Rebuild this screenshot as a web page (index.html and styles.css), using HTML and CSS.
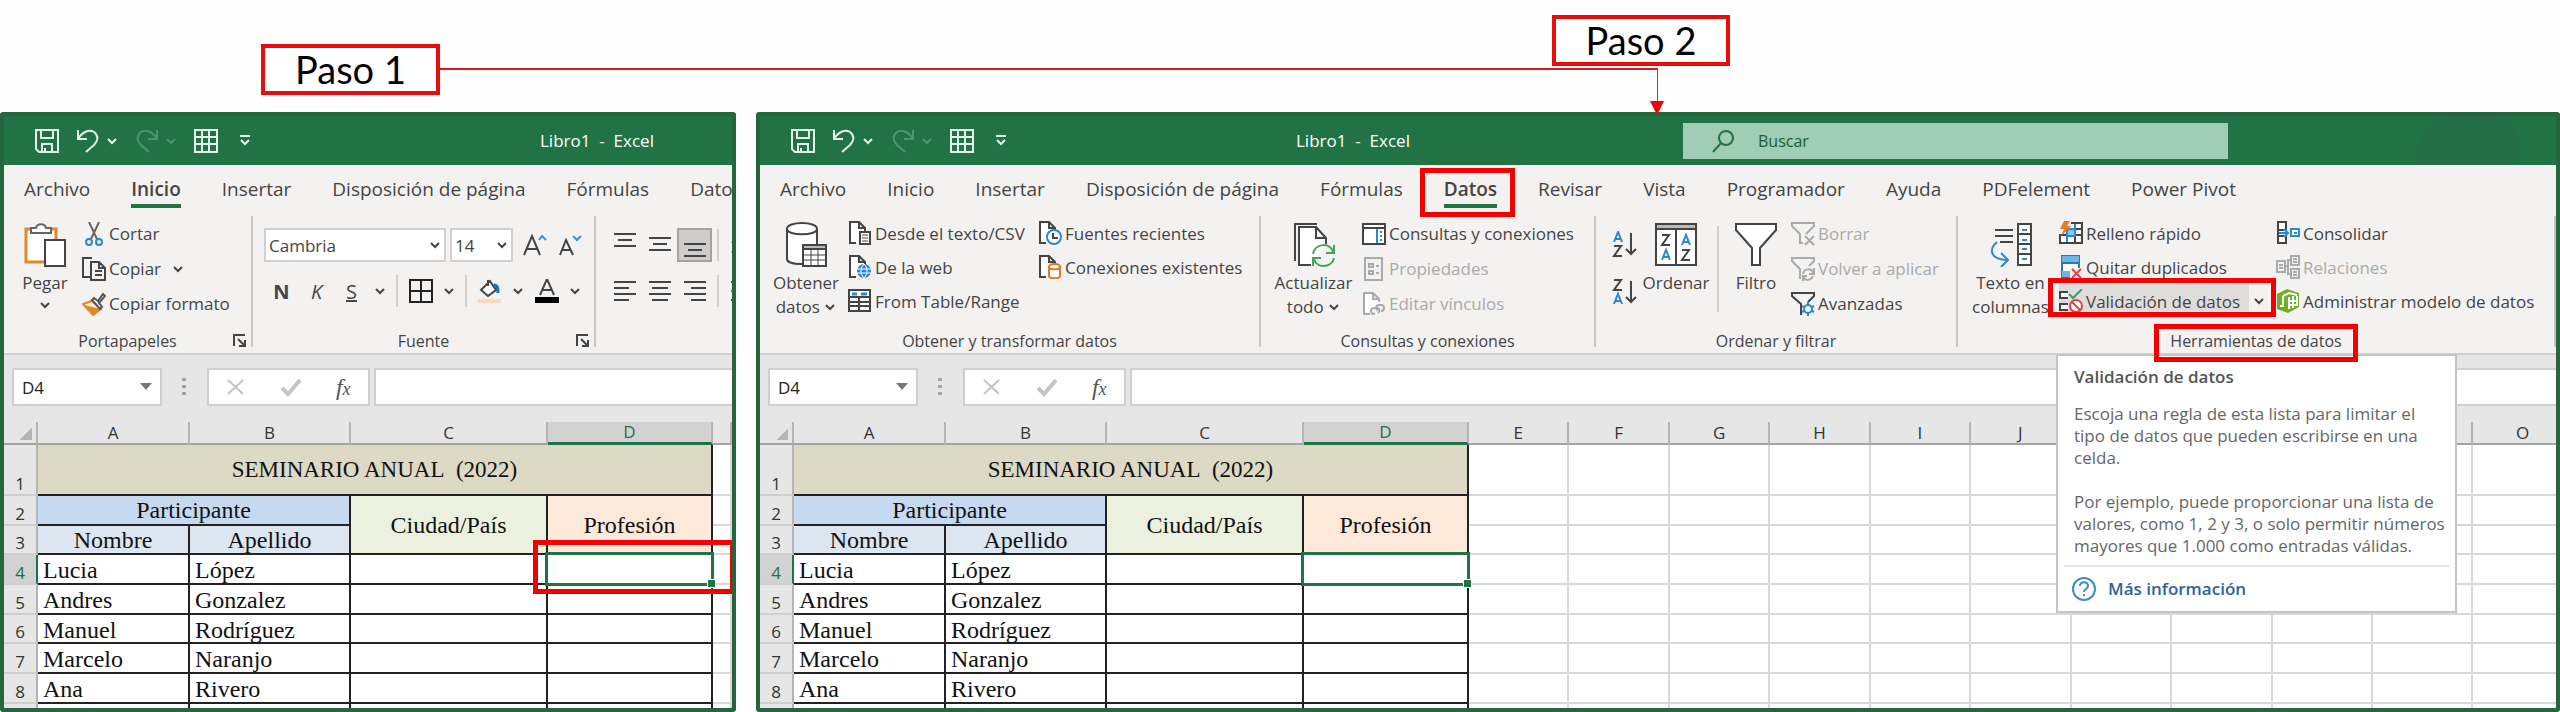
FILE: index.html
```html
<!DOCTYPE html>
<html lang="es">
<head>
    <meta charset="UTF-8">
    <meta name="viewport" content="width=device-width, initial-scale=1.0">
    <title>Validación de datos en Excel</title>
    <link rel="stylesheet" href="styles.css">
</head>
<body>
    <!-- shared icons -->
    <svg class="icon-defs" aria-hidden="true">
        <symbol id="i-save" viewBox="0 0 24 24"><path d="M1 1h22v22H4l-3-3zM6 1v8h12V1M7 23v-8h10v8M10 23v-4"/></symbol>
        <symbol id="i-undo" viewBox="0 0 24 24"><path d="M2 1v9h9M2 10C6 3 13 0 18 3c5 4 4 9 0 13l-8 7"/></symbol>
        <symbol id="i-redo" viewBox="0 0 24 24"><path d="M22 1v9h-9M22 10C18 3 11 0 6 3c-5 4-4 9 0 13l8 7"/></symbol>
        <symbol id="i-grid" viewBox="0 0 24 24"><path d="M1 1h22v22H1zM1 8h22M1 15h22M8 1v14M15 1v22M8 15v8"/></symbol>
        <symbol id="i-more" viewBox="0 0 12 12"><path d="M1 1h10M2 5l4 4 4-4"/></symbol>
        <symbol id="i-chev" viewBox="0 0 12 12"><path d="M2 4l4 4 4-4"/></symbol>
        <symbol id="i-launch" viewBox="0 0 14 14"><path d="M1 12V1h11M5 5l7 7M12 6v6H6"/></symbol>
        <symbol id="i-sheet" viewBox="0 0 24 24"><path fill="#fff" d="M8 22H2V1h9l6 6v3M11 1v6h6"/></symbol>
    </svg>

    <header class="steps">
        <div class="step step-one">Paso 1</div>
        <div class="step step-two">Paso 2</div>
        <div class="connector"></div>
        <svg class="connector-head" viewBox="0 0 14 14" aria-hidden="true"><path d="M0 0h14L7 14z"/></svg>
    </header>

    <main class="screens">
        <!-- Paso 1 -->
        <section class="excel">
            <div class="titlebar">
                <div class="quick-access">
                    <button aria-label="Guardar"><svg class="qi"><use href="#i-save"/></svg></button>
                    <button aria-label="Deshacer"><svg class="qi"><use href="#i-undo"/></svg><svg class="chev"><use href="#i-chev"/></svg></button>
                    <button class="faded" aria-label="Rehacer"><svg class="qi"><use href="#i-redo"/></svg><svg class="chev"><use href="#i-chev"/></svg></button>
                    <button aria-label="Tabla"><svg class="qi"><use href="#i-grid"/></svg></button>
                    <button aria-label="Personalizar"><svg class="chev more"><use href="#i-more"/></svg></button>
                </div>
                <div class="title">Libro1&nbsp; -&nbsp; Excel</div>
            </div>
            <nav class="tabs">
                <button>Archivo</button>
                <button class="active">Inicio</button>
                <button>Insertar</button>
                <button>Disposición de página</button>
                <button>Fórmulas</button>
                <button>Datos</button>
            </nav>
            <div class="ribbon">
                <div class="group group-clipboard">
                    <div class="group-body">
                        <button class="big">
                            <svg viewBox="0 0 42 45"><path stroke="#e2882a" stroke-width="3" fill="#fff" d="M12 7H2v33h19M22 7h10v11"/><path fill="#fff" stroke="none" d="M5 9h24v9h-9v20H5z"/><path stroke="#666" fill="#fff" d="M7 11V6h5c1-5 9-5 10 0h5v5z"/><path fill="#fff" d="M21 18h20v26H21z"/></svg>
                            <span>Pegar</span>
                            <svg class="chev"><use href="#i-chev"/></svg>
                        </button>
                        <div class="list">
                            <button><svg viewBox="0 0 24 24"><path stroke="#666" d="M7 0l8 17M17 0L9 17"/><circle cx="7" cy="20" r="3" stroke="#2b88d0"/><circle cx="17" cy="20" r="3" stroke="#2b88d0"/></svg>Cortar</button>
                            <button><svg viewBox="0 0 24 24"><path d="M8 20H1V1h9M9 5h8l6 6v12H9zM17 5v6h6M13 14h7M13 18h7"/></svg>Copiar<svg class="chev"><use href="#i-chev"/></svg></button>
                            <button><svg viewBox="0 0 24 24"><path stroke="#e2882a" fill="#fff3e0" d="M1 12l9-3 9 8-8 6z"/><path fill="#e2882a" stroke="none" d="M2 13l17 4-8 6z"/><path stroke="#555" fill="#fff" d="M10 8l2-2 4 3 5-7 2 2-6 7 3 4-2 2z"/></svg>Copiar formato</button>
                        </div>
                    </div>
                    <div class="group-name">Portapapeles<svg class="launch"><use href="#i-launch"/></svg></div>
                </div>
                <div class="group group-font">
                    <div class="tool-rows">
                        <div class="tool-row">
                            <label class="combo combo-font"><select aria-label="Fuente"><option>Cambria</option></select><svg class="chev"><use href="#i-chev"/></svg></label>
                            <label class="combo combo-size"><select aria-label="Tamaño"><option>14</option></select><svg class="chev"><use href="#i-chev"/></svg></label>
                            <button class="tool" aria-label="Aumentar"><svg viewBox="0 0 24 24"><path d="M1 22L9 3l8 19M4 16h10"/><path stroke="#3b95c9" d="M16 7l3-4 4 4"/></svg></button>
                            <button class="tool" aria-label="Disminuir"><svg viewBox="0 0 24 24"><path d="M2 22L8 7l7 15M4 17h9"/><path stroke="#3b95c9" d="M15 3l4 4 4-4"/></svg></button>
                        </div>
                        <div class="tool-row tool-row-tall">
                            <button class="tool"><b>N</b></button>
                            <button class="tool"><i>K</i></button>
                            <button class="tool"><u>S</u></button>
                            <svg class="chev tool-chev"><use href="#i-chev"/></svg>
                            <span class="bar"></span>
                            <button class="tool" aria-label="Bordes"><svg viewBox="0 0 24 24"><path stroke="#222" d="M1 1h22v22H1zM12 1v22M1 12h22"/></svg></button>
                            <svg class="chev tool-chev"><use href="#i-chev"/></svg>
                            <span class="bar"></span>
                            <button class="tool" aria-label="Relleno"><svg viewBox="0 0 24 24"><path fill="#fff" d="M3 11l9-9 6 9-8 6zM10 7V1"/><path stroke="#1f6fae" stroke-width="3" d="M16 6c4 0 4 4 4 8"/><path stroke="#fbd9bd" stroke-width="4" d="M0 22h23"/></svg></button>
                            <svg class="chev tool-chev"><use href="#i-chev"/></svg>
                            <button class="tool" aria-label="Color de fuente"><svg viewBox="0 0 24 24"><path d="M5 16l7-16 7 16M8 11h8"/><path stroke="#000" stroke-width="6" d="M0 21h24"/></svg></button>
                            <svg class="chev tool-chev"><use href="#i-chev"/></svg>
                        </div>
                    </div>
                    <div class="group-name">Fuente<svg class="launch"><use href="#i-launch"/></svg></div>
                </div>
                <div class="group group-align">
                    <div class="tool-rows">
                        <div class="tool-row">
                            <button class="tool" aria-label="Alinear arriba"><svg viewBox="0 0 24 24"><path d="M1 1h22M5 7h14M1 13h22"/></svg></button>
                            <button class="tool" aria-label="Alinear en medio"><svg viewBox="0 0 24 24"><path d="M1 5h22M5 11h14M1 17h22"/></svg></button>
                            <button class="tool pressed" aria-label="Alinear abajo"><svg viewBox="0 0 24 24"><path d="M1 11h22M5 17h14M1 23h22"/></svg></button>
                            <span class="bar"></span>
                            <button class="tool" aria-label="Orientación"><svg viewBox="0 0 24 24"><path d="M2 10c3-4 6-2 6 3M2 20l16-16"/></svg></button>
                        </div>
                        <div class="tool-row tool-row-tall">
                            <button class="tool" aria-label="Izquierda"><svg viewBox="0 0 24 24"><path d="M1 3h22M1 9h15M1 15h22M1 21h15"/></svg></button>
                            <button class="tool" aria-label="Centrar"><svg viewBox="0 0 24 24"><path d="M1 3h22M4 9h16M1 15h22M4 21h16"/></svg></button>
                            <button class="tool" aria-label="Derecha"><svg viewBox="0 0 24 24"><path d="M1 3h22M8 9h15M1 15h22M8 21h15"/></svg></button>
                            <span class="bar"></span>
                            <button class="tool" aria-label="Sangría"><svg viewBox="0 0 24 24"><path d="M1 3h22M12 9h11M1 21h22"/><path stroke="#2b88d0" d="M6 8l-4 4 4 4"/></svg></button>
                        </div>
                    </div>
                </div>
            </div>
            <div class="formula-bar">
                <label class="name-box"><input type="text" value="D4" aria-label="Cuadro de nombres"><svg viewBox="0 0 12 8"><path d="M0 0h12L6 7z"/></svg></label>
                <span class="dots"></span>
                <div class="formula-tools">
                    <button aria-label="Cancelar"><svg viewBox="0 0 20 20"><path d="M2 3l15 14M17 3L2 17"/></svg></button>
                    <button aria-label="Introducir"><svg viewBox="0 0 20 20"><path stroke-width="4" d="M1 11l6 6L19 3"/></svg></button>
                    <button class="fx"><i>f<small>x</small></i></button>
                </div>
                <input class="formula" type="text" aria-label="Barra de fórmulas">
            </div>
            <table class="sheet" data-extra="">
                <thead>
                    <tr><th class="corner"></th><th class="col-a">A</th><th class="col-b">B</th><th class="col-c">C</th><th class="col-d selected">D</th></tr>
                </thead>
                <tbody>
                    <tr class="row-title"><th>1</th><td colspan="4" class="heading tan">SEMINARIO ANUAL&nbsp; (2022)</td></tr>
                    <tr><th>2</th><td colspan="2" class="heading blue">Participante</td><td rowspan="2" class="heading green">Ciudad/País</td><td rowspan="2" class="heading peach">Profesión</td></tr>
                    <tr class="short"><th>3</th><td class="heading pale">Nombre</td><td class="heading pale">Apellido</td></tr>
                    <tr class="current"><th>4</th><td>Lucia</td><td>López</td><td></td><td class="cell-active"><span class="cursor"></span><span class="mark mark-cell"></span></td></tr>
                    <tr><th>5</th><td>Andres</td><td>Gonzalez</td><td></td><td></td></tr>
                    <tr class="short"><th>6</th><td>Manuel</td><td>Rodríguez</td><td></td><td></td></tr>
                    <tr><th>7</th><td>Marcelo</td><td>Naranjo</td><td></td><td></td></tr>
                    <tr><th>8</th><td>Ana</td><td>Rivero</td><td></td><td></td></tr>
                    <tr><th></th><td></td><td></td><td></td><td></td></tr>
                </tbody>
            </table>
        </section>

        <!-- Paso 2 -->
        <section class="excel">
            <div class="titlebar">
                <div class="quick-access">
                    <button aria-label="Guardar"><svg class="qi"><use href="#i-save"/></svg></button>
                    <button aria-label="Deshacer"><svg class="qi"><use href="#i-undo"/></svg><svg class="chev"><use href="#i-chev"/></svg></button>
                    <button class="faded" aria-label="Rehacer"><svg class="qi"><use href="#i-redo"/></svg><svg class="chev"><use href="#i-chev"/></svg></button>
                    <button aria-label="Tabla"><svg class="qi"><use href="#i-grid"/></svg></button>
                    <button aria-label="Personalizar"><svg class="chev more"><use href="#i-more"/></svg></button>
                </div>
                <div class="title">Libro1&nbsp; -&nbsp; Excel</div>
                <label class="search">
                    <svg viewBox="0 0 24 24"><circle cx="15" cy="9" r="7"/><path d="M10 14l-8 9"/></svg>
                    <input type="text" placeholder="Buscar" aria-label="Buscar">
                </label>
                <span class="account"></span>
            </div>
            <nav class="tabs">
                <button>Archivo</button>
                <button>Inicio</button>
                <button>Insertar</button>
                <button>Disposición de página</button>
                <button>Fórmulas</button>
                <button class="active">Datos<span class="mark mark-tab"></span></button>
                <button>Revisar</button>
                <button>Vista</button>
                <button>Programador</button>
                <button>Ayuda</button>
                <button>PDFelement</button>
                <button>Power Pivot</button>
            </nav>
            <div class="ribbon">
                <div class="group group-get">
                    <div class="group-body">
                        <button class="big">
                            <svg viewBox="0 0 42 45"><path fill="#fff" d="M17 42C8 42 2 40 2 37V7c0-8 30-8 30 0v15"/><path fill="#fff" d="M2 7c0 7 30 7 30 0"/><path fill="#fff" d="M18 23h23v21H18z"/><path fill="#bbb" d="M18 23h23v4H18z"/><path stroke-width="1" d="M18 33h23M18 38h23M26 27v17M33 27v17"/></svg>
                            <span>Obtener<br>datos <svg class="chev"><use href="#i-chev"/></svg></span>
                        </button>
                        <div class="list list-tight list-get">
                            <button><svg viewBox="0 0 24 24"><use href="#i-sheet"/><path fill="#fff" d="M12 11h10v12H12z"/><path stroke-width="1" d="M14 14h6M14 17h6M14 20h6"/></svg>Desde el texto/CSV</button>
                            <button><svg viewBox="0 0 24 24"><use href="#i-sheet"/><circle cx="16" cy="16" r="7" fill="#2b88d0" stroke="none"/><path stroke="#fff" stroke-width="1" d="M9 14h14M9 18h14M16 9c-4 4-4 10 0 14M16 9c4 4 4 10 0 14"/></svg>De la web</button>
                            <button><svg viewBox="0 0 24 24"><path fill="#fff" d="M1 1h21v21H1z"/><path d="M1 8h21M1 13h21M1 17h21M11 8v14"/><path stroke="#2b88d0" stroke-width="3" d="M4 5h5M13 5h6"/></svg>From Table/Range</button>
                        </div>
                        <div class="list list-tight">
                            <button><svg viewBox="0 0 24 24"><use href="#i-sheet"/><circle cx="16" cy="16" r="7" stroke="#2b88d0" fill="#fff"/><path d="M15 12v5h5"/></svg>Fuentes recientes</button>
                            <button><svg viewBox="0 0 24 24"><use href="#i-sheet"/><path stroke="#e27a20" fill="#fff" d="M11 12c0-4 11-4 11 0v9c0 3-11 3-11 0zM11 12c0 3 11 3 11 0"/></svg>Conexiones existentes</button>
                        </div>
                    </div>
                    <div class="group-name">Obtener y transformar datos</div>
                </div>
                <div class="group group-queries">
                    <div class="group-body">
                        <button class="big big-wide">
                            <svg viewBox="0 0 42 45"><path d="M2 39V2h22"/><path fill="#fff" d="M18 43H6V5h17l10 11v6M23 5v11h10"/><path stroke="#45a058" fill="none" d="M20 32c2-11 18-12 20-2M41 23v8h-8M41 36c-2 10-17 11-20 1M20 44v-8h8"/></svg>
                            <span>Actualizar<br>todo <svg class="chev"><use href="#i-chev"/></svg></span>
                        </button>
                        <div class="list">
                            <button><svg viewBox="0 0 24 24"><path fill="#fff" d="M1 2h22v20H1zM1 6h22"/><path stroke="#2b88d0" d="M15 7v14"/><path stroke="#2b88d0" stroke-dasharray="2 2" d="M19 9v11"/></svg>Consultas y conexiones</button>
                            <button disabled><svg viewBox="0 0 24 24"><path d="M3 1h17v22H3zM7 7h4v3H7zM7 14h4v3H7zM14 9h3M14 16h3"/></svg>Propiedades</button>
                            <button disabled><svg viewBox="0 0 24 24"><use href="#i-sheet"/><path d="M13 22h-1c-4 0-4-6 0-6h3c3 0 3 4 1 5M16 18c-3-1-2-5 1-5h2c4 0 4 6 0 6"/></svg>Editar vínculos</button>
                        </div>
                    </div>
                    <div class="group-name">Consultas y conexiones</div>
                </div>
                <div class="group group-sort">
                    <div class="group-body">
                        <div class="sort">
                            <button aria-label="Ordenar de A a Z"><svg viewBox="0 0 26 26"><path class="az" d="M2 11L6 1l4 10M3 8h6"/><path d="M2 15h7L2 25h8M19 2v21M14 18l5 5 5-5"/></svg></button>
                            <button aria-label="Ordenar de Z a A"><svg viewBox="0 0 26 26"><path d="M2 1h7L2 11h8M19 2v21M14 18l5 5 5-5"/><path class="az" d="M2 25l4-10 4 10M3 22h6"/></svg></button>
                        </div>
                        <button class="big big-sort">
                            <svg viewBox="0 0 42 45"><path fill="#fff" d="M1 2h40v41H1z"/><path fill="#bbb" d="M1 2h40v5H1zM21 7v36"/><path d="M7 13h7L7 23h8M27 28h7l-7 10h8"/><path class="az" d="M7 38l4-10 4 10M8 35h6M27 23l4-10 4 10M28 20h6"/></svg>
                            <span>Ordenar</span>
                        </button>
                        <span class="bar bar-tall"></span>
                        <button class="big big-sort">
                            <svg viewBox="0 0 42 45"><path fill="#fff" d="M1 2h40v6L25 26v17h-8V26L1 8z"/></svg>
                            <span>Filtro</span>
                        </button>
                        <div class="list">
                            <button disabled><svg viewBox="0 0 24 24"><path d="M12 21H9v-9L1 4V1h22v3l-8 8"/><path d="M14 14l9 9M23 14l-9 9"/></svg>Borrar</button>
                            <button disabled><svg viewBox="0 0 24 24"><path d="M10 21H9v-9L1 4V1h22v3l-5 5"/><path d="M12 17c1-6 9-6 10-1M23 11v6h-5M22 19c-2 5-8 5-10 1M12 24v-5h4"/></svg>Volver a aplicar</button>
                            <button><svg viewBox="0 0 24 24"><path d="M10 23V12L1 4V1h22v3l-6 6"/><circle cx="17" cy="17" r="4" stroke="#2b88d0" fill="none"/><path stroke="#2b88d0" d="M17 10v3M17 21v3M11 14l2 1M23 14l-2 1M11 20l2-1M23 20l-2-1"/></svg>Avanzadas</button>
                        </div>
                    </div>
                    <div class="group-name">Ordenar y filtrar</div>
                </div>
                <div class="group group-tools">
                    <div class="group-body">
                        <button class="big big-wide">
                            <svg viewBox="0 0 42 45"><path d="M5 8h18M5 14h18M10 20h13"/><path fill="#fff" d="M28 2h13v41H28zM28 12h13M28 22h13M28 32h13"/><path stroke="#2b88d0" d="M32 8h5M32 18h5M32 27h5M32 37h5"/><path stroke="#2b88d0" fill="none" d="M7 20c-9 8-6 17 9 18M11 31l7 7-7 7"/></svg>
                            <span>Texto en<br>columnas</span>
                        </button>
                        <div class="list list-tight list-tools">
                            <button><svg viewBox="0 0 24 24"><path fill="#fff" d="M12 2h11v20H1v-8h22M16 2v20M8 14v8M12 8h11"/><path stroke="#2b88d0" fill="#8ec4ee" d="M8 8h8v7H8zM8 15v6M16 3v12"/><path fill="#e87b1e" stroke="none" d="M5 0h6L8 5h4L2 15l3-7H1z"/></svg>Relleno rápido</button>
                            <button><svg viewBox="0 0 24 24"><path fill="#fff" stroke="#2b78b8" d="M3 1h17v21H3z"/><path fill="#70b3e6" stroke="none" d="M3 1h17v7H3zM3 16h8v6H3z"/><path stroke="#2b78b8" d="M3 8h17v5"/><path fill="#f2f1f0" stroke="none" d="M11 13h13v11H11z"/><path stroke="#e2434a" d="M13 14l9 9M22 14l-9 9"/></svg>Quitar duplicados</button>
                            <div class="split">
                                <button class="hovered"><svg viewBox="0 0 24 24"><path fill="#fff" d="M9 3H1v6h8M9 15H1v6h8"/><path stroke="#35a06a" fill="none" d="M10 5l4 4 9-9"/><circle cx="17" cy="17" r="6" stroke="#e2434a" fill="#fff"/><path stroke="#e2434a" d="M13 13l8 8"/></svg>Validación de datos</button>
                                <button aria-label="Más opciones de validación"><svg class="chev"><use href="#i-chev"/></svg></button>
                                <span class="mark mark-split"></span>
                                <div class="tooltip">
                                    <h3>Validación de datos</h3>
                                    <p>Escoja una regla de esta lista para limitar el tipo de datos que pueden escribirse en una celda.</p>
                                    <p>Por ejemplo, puede proporcionar una lista de valores, como 1, 2 y 3, o solo permitir números mayores que 1.000 como entradas válidas.</p>
                                    <a href="#"><svg viewBox="0 0 24 24"><circle cx="12" cy="12" r="11"/><path d="M8 9c0-5 8-5 8 0 0 3-4 3-4 6M12 17v2"/></svg>Más información</a>
                                </div>
                            </div>
                        </div>
                        <div class="list list-tight">
                            <button><svg viewBox="0 0 24 24"><path fill="#fff" d="M2 1h8v8H2zM2 15h8v7H2zM2 9v6"/><path stroke="#2b88d0" fill="#fff" d="M15 8h8v7h-8zM18 12h3M3 12h9M8 8l4 4-4 4"/></svg>Consolidar</button>
                            <button disabled><svg viewBox="0 0 24 24"><path d="M1 6h8v11H1zM3 10h4M3 13h4M15 1h8v9h-8zM17 4h4M17 7h4M15 14h8v9h-8zM17 17h4M17 20h4M9 11h3M15 5h-3v14h3"/></svg>Relaciones</button>
                            <button><svg viewBox="0 0 24 24"><path fill="#6fae28" stroke="none" d="M1 5l10-5 12 4v14l-11 6-11-4z"/><path stroke="#fff" d="M7 7v10H4M13 8v12M17 7v12M21 7v10M12 12h10M12 16h10M7 7l6-3 8 2"/></svg>Administrar modelo de datos</button>
                        </div>
                    </div>
                    <div class="group-name"><span class="marked">Herramientas de datos<span class="mark mark-name"></span></span></div>
                </div>
            </div>
            <div class="formula-bar">
                <label class="name-box"><input type="text" value="D4" aria-label="Cuadro de nombres"><svg viewBox="0 0 12 8"><path d="M0 0h12L6 7z"/></svg></label>
                <span class="dots"></span>
                <div class="formula-tools">
                    <button aria-label="Cancelar"><svg viewBox="0 0 20 20"><path d="M2 3l15 14M17 3L2 17"/></svg></button>
                    <button aria-label="Introducir"><svg viewBox="0 0 20 20"><path stroke-width="4" d="M1 11l6 6L19 3"/></svg></button>
                    <button class="fx"><i>f<small>x</small></i></button>
                </div>
                <input class="formula" type="text" aria-label="Barra de fórmulas">
            </div>
            <table class="sheet sheet-wide" data-extra="E,F,G,H,I,J,,,,,O">
                <thead>
                    <tr><th class="corner"></th><th class="col-a">A</th><th class="col-b">B</th><th class="col-c">C</th><th class="col-d selected">D</th></tr>
                </thead>
                <tbody>
                    <tr class="row-title"><th>1</th><td colspan="4" class="heading tan">SEMINARIO ANUAL&nbsp; (2022)</td></tr>
                    <tr><th>2</th><td colspan="2" class="heading blue">Participante</td><td rowspan="2" class="heading green">Ciudad/País</td><td rowspan="2" class="heading peach">Profesión</td></tr>
                    <tr class="short"><th>3</th><td class="heading pale">Nombre</td><td class="heading pale">Apellido</td></tr>
                    <tr class="current"><th>4</th><td>Lucia</td><td>López</td><td></td><td class="cell-active"><span class="cursor"></span></td></tr>
                    <tr><th>5</th><td>Andres</td><td>Gonzalez</td><td></td><td></td></tr>
                    <tr class="short"><th>6</th><td>Manuel</td><td>Rodríguez</td><td></td><td></td></tr>
                    <tr><th>7</th><td>Marcelo</td><td>Naranjo</td><td></td><td></td></tr>
                    <tr><th>8</th><td>Ana</td><td>Rivero</td><td></td><td></td></tr>
                    <tr><th></th><td></td><td></td><td></td><td></td></tr>
                </tbody>
            </table>
        </section>
    </main>

    <script>
        // add the empty columns to the right of D
        document.querySelectorAll('.sheet').forEach(function(sheet){
            let letters = sheet.dataset.extra.split(',');

            letters.forEach(function(letter){
                let head = document.createElement('th');
                head.innerText = letter;
                sheet.querySelector('thead tr').appendChild(head);

                sheet.querySelectorAll('tbody tr').forEach(function(row){
                    let cell = document.createElement('td');
                    cell.classList.add('blank');
                    row.appendChild(cell);
                });
            });
        });
    </script>
</body>
</html>
```
FILE: styles.css
```css
*{
    margin: 0;
    box-sizing: border-box;
}

body{
    background-color: #fefefe;
    color: #444;
    font-family: "Open Sans", "Noto Sans", sans-serif;
    font-size: 17px;
}

button, input, select{
    font: inherit;
    color: inherit;
    background: none;
    border: none;
    padding: 0;
    outline: none;
}

button{
    cursor: pointer;
    white-space: nowrap;
}

svg{
    flex: none;
    fill: none;
    stroke: #444;
    stroke-width: 2;
}

.icon-defs{
    position: absolute;
    width: 0;
    height: 0;
}

.chev{
    width: 12px;
    height: 12px;
}

/* red boxes drawn over the screens */
.mark{
    position: absolute;
    border: 5px solid #f50000;
    pointer-events: none;
    z-index: 3;
}

.mark-tab{
    inset: -5px -18px -13px -24px;
}

.mark-cell{
    inset: -15px -24px -11px -15px;
}

.mark-split{
    inset: -6px 0 1px -11px;
}

.mark-name{
    inset: -6px -16px -10px -16px;
}

/* steps */
.steps{
    position: relative;
    height: 112px;
}

.step{
    position: absolute;
    border: 4px solid #e80c0c;
    background-color: white;
    color: black;
    font-family: Lato, "Open Sans", sans-serif;
    font-size: 38px;
    line-height: 43px;
    text-align: center;
}

.step-one{
    left: 261px;
    top: 44px;
    width: 179px;
}

.step-two{
    left: 1552px;
    top: 15px;
    width: 178px;
}

.connector{
    position: absolute;
    left: 440px;
    top: 68px;
    width: 1218px;
    height: 36px;
    border-top: 2px solid #d21c1c;
    border-right: 1px solid #e02020;
}

.connector-head{
    position: absolute;
    left: 1650px;
    top: 101px;
    width: 14px;
    height: 14px;
    fill: #f50000;
    stroke: none;
    z-index: 3;
}

/* windows */
.screens{
    display: grid;
    grid-template-columns: minmax(0, 736fr) minmax(0, 1804fr);
    gap: 20px;
}

.excel{
    height: 600px;
    overflow: hidden;
    border: 4px solid #25663f;
    border-radius: 3px;
    background-color: #e6e6e6;
}

.titlebar{
    display: flex;
    align-items: center;
    height: 49px;
    background-color: #217346;
    color: white;
}

.quick-access{
    display: flex;
    flex: none;
    gap: 17px;
    width: 536px;
    padding-left: 31px;
}

.quick-access button{
    display: flex;
    align-items: center;
    gap: 6px;
}

.quick-access svg{
    stroke: #e3f3ea;
}

.quick-access .faded{
    opacity: 0.25;
}

.qi{
    width: 24px;
    height: 24px;
}

.more{
    margin-left: 4px;
}

.title{
    flex: 0 1 387px;
}

.search{
    display: flex;
    align-items: center;
    gap: 23px;
    flex: 0 1 545px;
    height: 36px;
    padding-left: 28px;
    background-color: #9fcdb5;
}

.search svg{
    width: 24px;
    height: 24px;
    stroke: #217346;
}

.search input{
    width: 200px;
    font-size: 16px;
}

.search input::placeholder{
    color: #1c5c39;
    opacity: 1;
}

.account{
    width: 104px;
    height: 49px;
    margin-left: 188px;
    border-radius: 40px 30px 10px 0;
    background-color: #246e45;
}

.tabs{
    display: flex;
    gap: 41px;
    height: 45px;
    padding: 4px 0 2px 20px;
    background-color: #f3f2f1;
    font-size: 19px;
}

.tabs button{
    position: relative;
    flex: none;
    border-top: 4px solid transparent;
    border-bottom: 4px solid transparent;
    line-height: 30px;
}

.tabs .active{
    font-weight: 600;
    border-bottom-color: #217346;
}

/* ribbon */
.ribbon{
    display: flex;
    height: 145px;
    padding-top: 6px;
    background-color: #f3f2f1;
    border-bottom: 2px solid #d2d0ce;
}

.group{
    display: flex;
    flex-direction: column;
    flex: none;
    height: 131px;
    border-right: 2px solid #c8c6c4;
}

.group-clipboard{
    width: 249px;
}

.group-font{
    width: 343px;
}

.group-align{
    width: 343px;
}

.group-get{
    width: 501px;
}

.group-queries{
    width: 335px;
}

.group-sort{
    width: 362px;
}

.group-tools{
    flex: 1;
}

.group-body{
    display: flex;
    flex: none;
    height: 114px;
    padding-left: 4px;
}

.group-name{
    display: flex;
    align-items: center;
    justify-content: center;
    flex: none;
    position: relative;
    height: 22px;
    font-size: 16px;
}

.marked{
    position: relative;
    line-height: 22px;
}

.launch{
    position: absolute;
    right: 4px;
    width: 14px;
    height: 14px;
}

.big{
    display: flex;
    flex-direction: column;
    align-items: center;
    gap: 4px;
    flex: none;
    width: 84px;
    padding-top: 6px;
    line-height: 24px;
}

.group-clipboard .big{
    width: 74px;
}

.big-wide{
    width: 97px;
}

.big-sort{
    width: 70px;
}

.big > svg:first-child{
    width: 42px;
    height: 45px;
}

.list{
    display: flex;
    flex-direction: column;
    flex: none;
}

.list-get{
    width: 190px;
}

.list-tools{
    width: 217px;
}

.list button{
    display: flex;
    align-items: center;
    gap: 3px;
    height: 35px;
}

.list-tight button{
    height: 34px;
}

.list button > svg:first-child:not(.chev){
    width: 24px;
    height: 24px;
}

.list button .chev{
    margin-left: 8px;
}

.list button:disabled{
    color: #aaa;
}

.list button:disabled svg{
    stroke: #aaa;
}

.split{
    position: relative;
    display: flex;
}

.split .hovered{
    width: 190px;
    background-color: #dfdddb;
}

.list .split .chev{
    margin: 0 4px;
}

.sort{
    display: flex;
    flex-direction: column;
    flex: none;
    gap: 22px;
    padding: 15px 3px 0 12px;
}

.sort svg{
    width: 26px;
    height: 26px;
    display: block;
}

.az{
    stroke: #2b88d0;
}

.bar{
    flex: none;
    width: 2px;
    height: 32px;
    margin: 0 5px;
    background-color: #d2d0ce;
}

.bar-tall{
    height: 86px;
    margin: 10px 2px 0 6px;
}

.tool-rows{
    display: flex;
    flex-direction: column;
    gap: 10px;
    flex: none;
    height: 114px;
    padding: 12px 0 0 11px;
}

.tool-row{
    display: flex;
    align-items: center;
    height: 34px;
}

.tool-row-tall{
    height: 38px;
}

.tool{
    display: flex;
    align-items: center;
    justify-content: center;
    flex: none;
    width: 35px;
    height: 34px;
    font-size: 20px;
}

.tool svg{
    width: 24px;
    height: 24px;
}

.pressed{
    background-color: #cfcdcb;
    border: 2px solid #a5a3a1;
}

.tool-chev{
    margin: 0 5px;
}

.combo{
    display: flex;
    align-items: center;
    height: 34px;
    margin-right: 4px;
    padding: 0 3px;
    border: 2px solid #d2d0ce;
    background-color: white;
}

.combo select{
    flex: 1;
    min-width: 0;
    appearance: none;
}

.combo-font{
    width: 182px;
}

.combo-size{
    width: 63px;
}

/* tooltip under Validación de datos */
.tooltip{
    position: absolute;
    left: -3px;
    top: 70px;
    width: 401px;
    padding: 10px 6px 0 16px;
    border: 2px solid #c4c4c4;
    background-color: white;
    color: #666;
    line-height: 22px;
    z-index: 2;
}

.tooltip h3{
    margin-bottom: 15px;
    color: #555;
    font-size: 17px;
    font-weight: 600;
}

.tooltip p{
    margin-bottom: 22px;
}

.tooltip p + p{
    margin-bottom: 8px;
}

.tooltip a{
    display: flex;
    align-items: center;
    gap: 12px;
    height: 46px;
    margin: 0 0 0 -10px;
    padding-left: 8px;
    border-top: 2px solid #e3e3e3;
    color: #2f6299;
    font-weight: 600;
    text-decoration: none;
}

.tooltip a svg{
    width: 24px;
    height: 24px;
    stroke: #3b8fc4;
}

/* formula bar */
.formula-bar{
    display: flex;
    height: 67px;
    padding: 13px 0 16px 8px;
}

.name-box{
    display: flex;
    align-items: center;
    width: 150px;
    padding: 0 8px;
    border: 2px solid #cfcfcf;
    background-color: white;
    color: #222;
}

.name-box input{
    flex: 1;
    min-width: 0;
}

.name-box svg{
    width: 12px;
    height: 8px;
    fill: #777;
    stroke: none;
}

.dots{
    width: 4px;
    margin: 10px 21px 10px 20px;
    background: repeating-linear-gradient(#a5a5a5 0 3px, transparent 3px 7px);
}

.formula-tools{
    display: flex;
    align-items: center;
    justify-content: space-around;
    width: 163px;
    border: 2px solid #cfcfcf;
    background-color: white;
}

.formula-tools svg{
    display: block;
    width: 20px;
    height: 20px;
    stroke: #c4c4c4;
}

.fx{
    color: #555;
    font-family: "Liberation Serif", serif;
    font-size: 24px;
}

.fx small{
    font-size: 18px;
}

.formula{
    flex: 1;
    min-width: 0;
    margin-left: 4px;
    border: 2px solid #cfcfcf;
    border-right: none;
    background-color: white;
}

/* sheet */
.sheet{
    width: 100%;
    table-layout: fixed;
    border-collapse: separate;
    border-spacing: 0;
    background-color: white;
}

.sheet-wide{
    width: 101%;
}

.sheet th, .sheet td{
    height: 30px;
    padding: 0;
    line-height: 20px;
    overflow: visible;
}

.sheet .short th, .sheet .short td{
    height: 29px;
}

.sheet th{
    background-color: #e6e6e6;
    border-right: 2px solid #b5b5b5;
    border-bottom: 2px solid #cfcfcf;
    color: #333;
    font-weight: 400;
    vertical-align: bottom;
}

.sheet thead th{
    height: 23px;
    border-bottom: 2px solid #a3a3a3;
}

.sheet .corner{
    width: 34px;
    background-image: linear-gradient(135deg, transparent 50%, #b5b5b5 50%);
    background-size: 12px 12px;
    background-position: 16px 6px;
    background-repeat: no-repeat;
}

.col-a{
    width: 152px;
}

.col-b{
    width: 161px;
}

.col-c{
    width: 197px;
}

.col-d{
    width: 165px;
}

.sheet .selected{
    background-color: #d2d2d2;
    border-bottom: 3px solid #217346;
    color: #217346;
}

.sheet .current th{
    background-color: #d2d2d2;
    border-right-color: #217346;
    color: #217346;
}

.sheet td{
    padding: 2px 0 0 5px;
    border-right: 2px solid #222;
    border-bottom: 2px solid #222;
    color: #111;
    font-family: "Liberation Serif", serif;
    font-size: 24px;
    white-space: nowrap;
}

.sheet .heading{
    padding: 0;
    text-align: center;
}

.sheet .row-title td, .sheet .row-title th{
    height: 51px;
}

.sheet .tan{
    background-color: #ddd9c4;
    font-size: 23px;
}

.sheet .blue{
    background-color: #c5d9f1;
}

.sheet .pale{
    background-color: #dce6f1;
}

.sheet .green{
    background-color: #ebf1de;
}

.sheet .peach{
    background-color: #fde9d9;
}

.sheet td.blank{
    border-color: #d9d9d9;
}

.cell-active{
    position: relative;
}

.cursor{
    position: absolute;
    inset: -3px -3px -3px -3px;
    border: 3px solid #217346;
}

.cursor::after{
    content: "";
    position: absolute;
    right: -5px;
    bottom: -5px;
    width: 7px;
    height: 7px;
    background-color: #217346;
    border: 1px solid white;
    box-sizing: content-box;
}
```
